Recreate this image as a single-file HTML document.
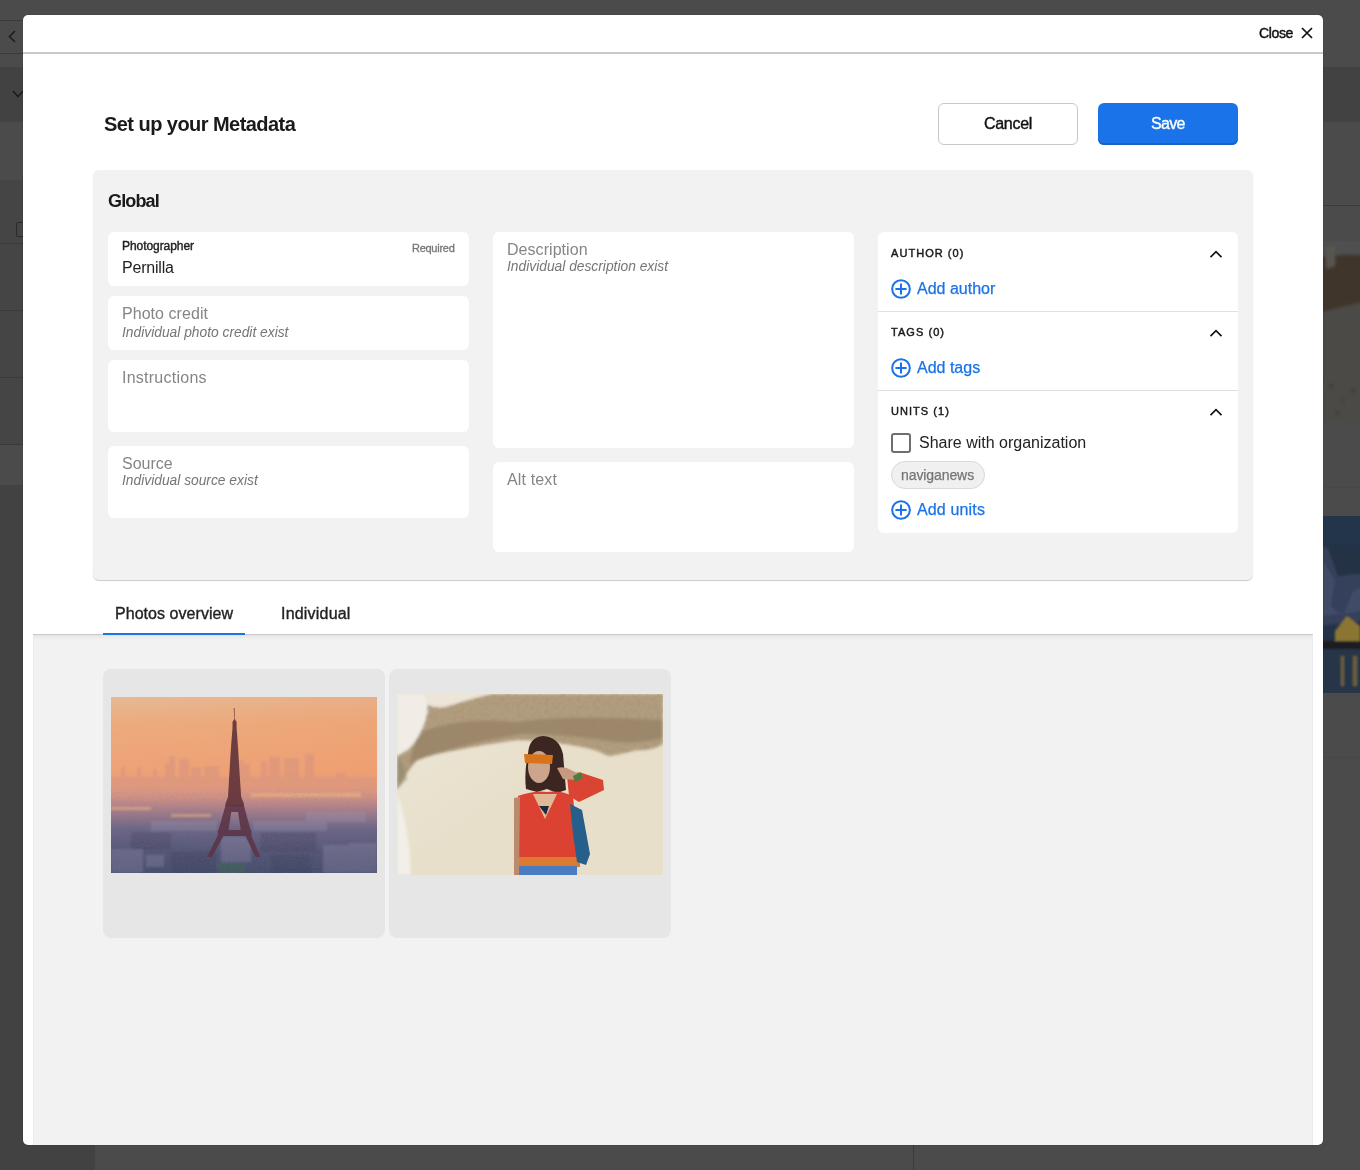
<!DOCTYPE html>
<html><head><meta charset="utf-8">
<style>
*{box-sizing:border-box;margin:0;padding:0}
html,body{width:1360px;height:1170px;overflow:hidden;background:#4b4b4b;font-family:"Liberation Sans",sans-serif;position:relative}
.abs{position:absolute}
.t{position:absolute;white-space:nowrap;line-height:1;-webkit-font-smoothing:antialiased;will-change:transform}
</style></head><body>
<div class='abs' style='left:0px;top:0px;width:1360px;height:1170px;background:#4b4b4b'></div>
<div class='abs' style='left:0px;top:67px;width:1360px;height:55px;background:#424242'></div>
<div class='abs' style='left:0px;top:20px;width:23px;height:1px;background:#3a3a3a'></div>
<div class='abs' style='left:0px;top:53px;width:23px;height:1px;background:#3a3a3a'></div>
<div class='abs' style='left:0px;top:180px;width:95px;height:63px;background:#454545'></div>
<div class='abs' style='left:0px;top:243px;width:95px;height:1px;background:#3a3a3a'></div>
<div class='abs' style='left:0px;top:244px;width:95px;height:66px;background:#454545'></div>
<div class='abs' style='left:0px;top:310px;width:95px;height:1px;background:#3a3a3a'></div>
<div class='abs' style='left:0px;top:311px;width:95px;height:66px;background:#454545'></div>
<div class='abs' style='left:0px;top:377px;width:95px;height:1px;background:#3a3a3a'></div>
<div class='abs' style='left:0px;top:378px;width:95px;height:66px;background:#454545'></div>
<div class='abs' style='left:0px;top:444px;width:95px;height:1px;background:#3a3a3a'></div>
<div class='abs' style='left:0px;top:485px;width:95px;height:685px;background:#424242'></div>
<div class='abs' style='left:913px;top:1145px;width:1px;height:25px;background:#3a3a3a'></div>
<div class='abs' style='left:1323px;top:205px;width:37px;height:1px;background:#3a3a3a'></div>
<div class='abs' style='left:1323px;top:487px;width:37px;height:1px;background:#474747'></div>
<div class='abs' style='left:1323px;top:757px;width:37px;height:1px;background:#474747'></div>
<div class='abs' style='left:16px;top:222px;width:14px;height:15px;border:1.5px solid #2a2a2a;border-radius:2px'></div>
<svg class='abs' style='left:0;top:0' width='30' height='120'><path d='M15 31 L9.5 36.5 L15 42' fill='none' stroke='#1c1c1c' stroke-width='1.6'/><path d='M13 91 L18 96.5 L23 91' fill='none' stroke='#1c1c1c' stroke-width='1.6'/></svg>
<svg class='abs' style='left:1323px;top:241px' width='37' height='181'><defs><filter id='rb'><feGaussianBlur stdDeviation='1.5'/></filter></defs><rect width='37' height='181' fill='#4c4a47'/><g filter='url(#rb)'><rect x='-5' y='-5' width='47' height='24' fill='#4f4f4f'/><path d='M-5 17 Q15 12 42 14 L42 60 Q20 66 -5 72Z' fill='#3f362c'/><path d='M3 5 L12 5 L12 25 L3 28Z' fill='#575550'/><g fill='#3e3b37'><circle cx='8' cy='145' r='2'/><circle cx='20' cy='160' r='1.5'/><circle cx='30' cy='150' r='2'/><circle cx='14' cy='172' r='2'/></g></g></svg>
<svg class='abs' style='left:1323px;top:516px' width='37' height='177'><defs><filter id='rb2'><feGaussianBlur stdDeviation='1.2'/></filter></defs><rect width='37' height='177' fill='#243246'/><g filter='url(#rb2)'><rect x='-5' y='-5' width='47' height='35' fill='#20344a'/><path d='M-5 30 L5 32 L15 60 L30 58 L42 58 L42 105 L-5 110Z' fill='#353f5a'/><path d='M0 45 L12 65 L8 90 L20 100 L30 75 L42 70 L42 95 L0 100Z' fill='#42506c' opacity='0.8'/><path d='M12 115 L24 100 L37 110 L37 128 L12 128Z' fill='#8a7632'/><rect x='-5' y='125' width='47' height='8' fill='#1c1c22'/><rect x='-5' y='133' width='47' height='50' fill='#273447'/><rect x='18' y='140' width='3' height='30' fill='#6a6040'/><rect x='30' y='140' width='4' height='30' fill='#6a6040'/></g></svg>
<div class='abs' style='left:23px;top:15px;width:1300px;height:1130px;background:#fff;border-radius:5px;box-shadow:0 0 1px rgba(0,0,0,0.6)'></div>
<div class='abs' style='left:23px;top:52px;width:1300px;height:2px;background:#c9c9c9'></div>
<div class='t' style='left:1258.50px;top:26.00px;font-size:14px;font-weight:normal;font-style:normal;color:#111;letter-spacing:-0.36px;-webkit-text-stroke:0.45px currentColor;'>Close</div>
<svg class='abs' style='left:1300px;top:25.5px' width='14' height='14'><path d='M2 2 L12 12 M12 2 L2 12' stroke='#111' stroke-width='1.7' fill='none'/></svg>
<div class='t' style='left:103.70px;top:114.00px;font-size:20px;font-weight:bold;font-style:normal;color:#1a1a1a;letter-spacing:-0.55px;'>Set up your Metadata</div>
<div class='abs' style='left:938px;top:103px;width:140px;height:42px;border:1px solid #c8c8c8;border-radius:6px;background:#fff'></div>
<div class='t' style='left:983.80px;top:116.00px;font-size:16px;font-weight:normal;font-style:normal;color:#111;letter-spacing:-0.3px;-webkit-text-stroke:0.4px currentColor;'>Cancel</div>
<div class='abs' style='left:1098px;top:103px;width:140px;height:42px;background:#1a73e8;border-radius:6px;box-shadow:inset 0 -2px 0 #1a62c4'></div>
<div class='t' style='left:1151.20px;top:116.00px;font-size:16px;font-weight:normal;font-style:normal;color:#fff;letter-spacing:-0.7px;-webkit-text-stroke:0.35px currentColor;'>Save</div>
<div class='abs' style='left:93px;top:170px;width:1160px;height:410px;background:#f2f2f2;border-radius:6px;box-shadow:0 1px 1px rgba(0,0,0,0.2)'></div>
<div class='t' style='left:108.30px;top:192.00px;font-size:18px;font-weight:bold;font-style:normal;color:#1a1a1a;letter-spacing:-0.85px;'>Global</div>
<div class='abs' style='left:108px;top:232px;width:361px;height:54px;background:#fff;border-radius:6px'></div>
<div class='abs' style='left:108px;top:296px;width:361px;height:54px;background:#fff;border-radius:6px'></div>
<div class='abs' style='left:108px;top:360px;width:361px;height:72px;background:#fff;border-radius:6px'></div>
<div class='abs' style='left:108px;top:446px;width:361px;height:72px;background:#fff;border-radius:6px'></div>
<div class='t' style='left:122.40px;top:240.00px;font-size:12px;font-weight:normal;font-style:normal;color:#1f1f1f;letter-spacing:-0.06px;-webkit-text-stroke:0.4px currentColor;'>Photographer</div>
<div class='t' style='right:905.40px;top:243.00px;font-size:11px;font-weight:normal;font-style:normal;color:#757575;letter-spacing:-0.27px;-webkit-text-stroke:0.3px currentColor;'>Required</div>
<div class='t' style='left:121.80px;top:260.00px;font-size:16px;font-weight:normal;font-style:normal;color:#222;letter-spacing:-0.2px;'>Pernilla</div>
<div class='t' style='left:122.40px;top:306.00px;font-size:16px;font-weight:normal;font-style:normal;color:#858585;letter-spacing:0.05px;'>Photo credit</div>
<div class='t' style='left:122.40px;top:326.00px;font-size:13.8px;font-weight:normal;font-style:italic;color:#757575;letter-spacing:0px;'>Individual photo credit exist</div>
<div class='t' style='left:122.40px;top:370.00px;font-size:16px;font-weight:normal;font-style:normal;color:#858585;letter-spacing:0.25px;'>Instructions</div>
<div class='t' style='left:122.40px;top:456.00px;font-size:16px;font-weight:normal;font-style:normal;color:#858585;letter-spacing:0px;'>Source</div>
<div class='t' style='left:122.40px;top:474.00px;font-size:13.8px;font-weight:normal;font-style:italic;color:#757575;letter-spacing:0px;'>Individual source exist</div>
<div class='abs' style='left:493px;top:232px;width:361px;height:216px;background:#fff;border-radius:6px'></div>
<div class='abs' style='left:493px;top:462px;width:361px;height:90px;background:#fff;border-radius:6px'></div>
<div class='t' style='left:507.00px;top:242.00px;font-size:16px;font-weight:normal;font-style:normal;color:#858585;letter-spacing:0.05px;'>Description</div>
<div class='t' style='left:507.00px;top:260.00px;font-size:13.8px;font-weight:normal;font-style:italic;color:#757575;letter-spacing:0px;'>Individual description exist</div>
<div class='t' style='left:507.00px;top:472.00px;font-size:16px;font-weight:normal;font-style:normal;color:#858585;letter-spacing:0.15px;'>Alt text</div>
<div class='abs' style='left:878px;top:232px;width:360px;height:301px;background:#fff;border-radius:6px'></div>
<div class='abs' style='left:878px;top:311px;width:360px;height:1px;background:#e0e0e0'></div>
<div class='abs' style='left:878px;top:390px;width:360px;height:1px;background:#e0e0e0'></div>
<div class='t' style='left:891.20px;top:248.00px;font-size:11px;font-weight:normal;font-style:normal;color:#1a1a1a;letter-spacing:1.05px;-webkit-text-stroke:0.45px currentColor;'>AUTHOR (0)</div>
<svg class='abs' style='left:1205px;top:246px' width='22' height='14'><path d='M5.5 11.2 L11 5.7 L16.5 11.2' fill='none' stroke='#111' stroke-width='1.65'/></svg>
<div class='t' style='left:891.20px;top:327.00px;font-size:11px;font-weight:normal;font-style:normal;color:#1a1a1a;letter-spacing:1.05px;-webkit-text-stroke:0.45px currentColor;'>TAGS (0)</div>
<svg class='abs' style='left:1205px;top:325px' width='22' height='14'><path d='M5.5 11.2 L11 5.7 L16.5 11.2' fill='none' stroke='#111' stroke-width='1.65'/></svg>
<div class='t' style='left:891.20px;top:406.00px;font-size:11px;font-weight:normal;font-style:normal;color:#1a1a1a;letter-spacing:1.05px;-webkit-text-stroke:0.45px currentColor;'>UNITS (1)</div>
<svg class='abs' style='left:1205px;top:404px' width='22' height='14'><path d='M5.5 11.2 L11 5.7 L16.5 11.2' fill='none' stroke='#111' stroke-width='1.65'/></svg>
<svg class='abs' style='left:890px;top:278px' width='22' height='22'><circle cx='11' cy='11' r='8.85' fill='none' stroke='#1a73e8' stroke-width='2'/><path d='M11 5.4 V16.6 M5.4 11 H16.6' stroke='#1a73e8' stroke-width='2'/></svg>
<div class='t' style='left:916.80px;top:281.00px;font-size:16px;font-weight:normal;font-style:normal;color:#1a73e8;letter-spacing:0px;-webkit-text-stroke:0.25px currentColor;'>Add author</div>
<svg class='abs' style='left:890px;top:357px' width='22' height='22'><circle cx='11' cy='11' r='8.85' fill='none' stroke='#1a73e8' stroke-width='2'/><path d='M11 5.4 V16.6 M5.4 11 H16.6' stroke='#1a73e8' stroke-width='2'/></svg>
<div class='t' style='left:916.80px;top:360.00px;font-size:16px;font-weight:normal;font-style:normal;color:#1a73e8;letter-spacing:0px;-webkit-text-stroke:0.25px currentColor;'>Add tags</div>
<div class='abs' style='left:891px;top:433px;width:20px;height:20px;border:2px solid #6e6e6e;border-radius:3px'></div>
<div class='t' style='left:919.30px;top:435.00px;font-size:16px;font-weight:normal;font-style:normal;color:#222;letter-spacing:0px;'>Share with organization</div>
<div class='abs' style='left:891px;top:461px;width:94px;height:28px;background:#f0f0f0;border:1px solid #d9d9d9;border-radius:14px'></div>
<div class='t' style='left:901.20px;top:468.00px;font-size:14px;font-weight:normal;font-style:normal;color:#757575;letter-spacing:-0.09px;-webkit-text-stroke:0.25px currentColor;'>naviganews</div>
<svg class='abs' style='left:890px;top:499px' width='22' height='22'><circle cx='11' cy='11' r='8.85' fill='none' stroke='#1a73e8' stroke-width='2'/><path d='M11 5.4 V16.6 M5.4 11 H16.6' stroke='#1a73e8' stroke-width='2'/></svg>
<div class='t' style='left:916.80px;top:502.00px;font-size:16px;font-weight:normal;font-style:normal;color:#1a73e8;letter-spacing:0.15px;-webkit-text-stroke:0.25px currentColor;'>Add units</div>
<div class='t' style='left:115.00px;top:606.00px;font-size:16px;font-weight:normal;font-style:normal;color:#222;letter-spacing:0.05px;-webkit-text-stroke:0.35px currentColor;'>Photos overview</div>
<div class='t' style='left:280.60px;top:606.00px;font-size:16px;font-weight:normal;font-style:normal;color:#222;letter-spacing:0.2px;-webkit-text-stroke:0.35px currentColor;'>Individual</div>
<div class='abs' style='left:33px;top:634px;width:1280px;height:511px;background:#f2f2f2;border-left:1px solid #ebebeb;border-right:1px solid #ebebeb'></div>
<div class='abs' style='left:33px;top:634px;width:1280px;height:1px;background:#c8c8c8'></div>
<div class='abs' style='left:34px;top:635px;width:1278px;height:5px;background:linear-gradient(#e6e6e6,#f2f2f2)'></div>
<div class='abs' style='left:103px;top:633px;width:142px;height:2px;background:#1a73e8'></div>
<div class='abs' style='left:103px;top:669px;width:282px;height:269px;background:#e6e6e6;border-radius:8px'></div>
<div class='abs' style='left:389px;top:669px;width:282px;height:269px;background:#e6e6e6;border-radius:8px'></div>
<svg class='abs' style='left:111px;top:697px' width='266' height='176' viewBox='0 0 266 176' preserveAspectRatio='none'><defs>
<linearGradient id='psky' x1='0' y1='0' x2='0' y2='1'>
<stop offset='0' stop-color='#e6b995'/>
<stop offset='0.15' stop-color='#ecab7e'/>
<stop offset='0.42' stop-color='#eea277'/>
<stop offset='0.5' stop-color='#e49e80'/>
<stop offset='0.57' stop-color='#cf9085'/>
<stop offset='0.65' stop-color='#a27c8a'/>
<stop offset='0.75' stop-color='#6c6686'/>
<stop offset='0.88' stop-color='#545676'/>
<stop offset='1' stop-color='#464e6c'/>
</linearGradient>
<linearGradient id='pright' x1='0' y1='0' x2='1' y2='0'>
<stop offset='0' stop-color='#f0a070' stop-opacity='0'/>
<stop offset='1' stop-color='#f09a68' stop-opacity='0.35'/>
</linearGradient>
<filter id='pb' x='-5%' y='-5%' width='110%' height='110%'><feGaussianBlur stdDeviation='0.9'/></filter>
<filter id='pn' x='0' y='0' width='100%' height='100%'>
<feTurbulence type='fractalNoise' baseFrequency='0.6' numOctaves='2' seed='3' result='n'/>
<feColorMatrix in='n' type='matrix' values='0 0 0 0 0.2  0 0 0 0 0.2  0 0 0 0 0.3  0 0 0 1.6 -0.75'/>
</filter>
</defs>
<rect width='266' height='176' fill='url(#psky)'/>
<rect width='266' height='90' fill='url(#pright)'/>
<g filter='url(#pb)'>
<g fill='#dc967c' opacity='0.75'>
<rect x='10' y='70' width='4' height='22'/><rect x='26' y='70' width='4' height='22'/><rect x='42' y='72' width='4' height='20'/>
<rect x='54' y='66' width='5' height='26'/><rect x='58' y='59' width='6' height='33'/><rect x='68' y='62' width='10' height='30'/>
<rect x='80' y='70' width='10' height='22'/><rect x='93' y='69' width='15' height='25'/><rect x='128' y='63' width='5' height='28'/><rect x='133' y='67' width='6' height='25'/>
<rect x='150' y='64' width='6' height='28'/><rect x='158' y='60' width='11' height='32'/><rect x='173' y='61' width='15' height='30'/>
<rect x='194' y='57' width='9' height='34'/><rect x='225' y='76' width='10' height='16'/>
<rect x='0' y='80' width='266' height='14'/>
</g>
<g fill='#f6bc80' opacity='0.5'><rect x='140' y='96' width='110' height='4'/><rect x='0' y='110' width='40' height='3'/><rect x='60' y='117' width='40' height='3'/></g>
<g fill='#a8a0bc' opacity='0.25'>
<rect x='40' y='124' width='66' height='10'/><rect x='142' y='124' width='74' height='10'/>
<rect x='212' y='148' width='28' height='28'/><rect x='238' y='146' width='28' height='30'/><rect x='0' y='152' width='32' height='24'/><rect x='35' y='158' width='18' height='12'/>
<rect x='110' y='140' width='30' height='25'/><rect x='195' y='115' width='60' height='10'/>
</g>
<g fill='#303450' opacity='0.22'>
<rect x='20' y='135' width='40' height='18'/><rect x='150' y='135' width='55' height='20'/><rect x='60' y='155' width='45' height='21'/><rect x='160' y='158' width='40' height='18'/>
</g>
<rect x='108' y='166' width='26' height='10' fill='#3e6a50' opacity='0.5'/>
</g>
<rect y='92' width='266' height='84' filter='url(#pn)' opacity='0.35'/>
<g fill='#62343c' opacity='0.92'>
<path d='M122.7 11 L123.5 11 L123.8 22 L125.6 25 L125.6 31 L127 50 L129 83 L130.2 100 L133 107 L133 109 L114.4 109 L114.4 107 L117 100 L118 83 L120 50 L121.5 31 L121.5 25 L123.3 22Z'/>
</g>
<g fill='#5c3446' opacity='0.88'>
<path d='M114.6 108 L132.8 108 L136 120 L139.6 133 L140.4 134 L140.4 139 L106.8 139 L106.8 134 L107.6 133 L111.2 120Z M117.5 133 L129.8 133 L127 115 L120.3 115Z' fill-rule='evenodd'/>
<path d='M107 138 L113 138 L101 160 L96 160Z M134 138 L140 138 L149.5 160 L144.5 160Z'/>
</g>
</svg>
<svg class='abs' style='left:397px;top:694px' width='266' height='181' viewBox='0 0 266 181' preserveAspectRatio='none'><defs>
<linearGradient id='wsand' x1='0' y1='0' x2='1' y2='1'>
<stop offset='0' stop-color='#ede7d8'/>
<stop offset='0.5' stop-color='#e7dfca'/>
<stop offset='1' stop-color='#e8dfca'/>
</linearGradient>
<filter id='wb' x='-10%' y='-10%' width='120%' height='120%'><feGaussianBlur stdDeviation='1.5'/></filter>
<filter id='wb2' x='-10%' y='-10%' width='120%' height='120%'><feGaussianBlur stdDeviation='0.7'/></filter>
<filter id='wn' x='0' y='0' width='100%' height='100%'>
<feTurbulence type='fractalNoise' baseFrequency='0.25' numOctaves='3' seed='7' result='n'/>
<feColorMatrix in='n' type='matrix' values='0 0 0 0 0.35  0 0 0 0 0.27  0 0 0 0 0.18  0 0 0 2.2 -1.0'/>
</filter>
<clipPath id='wclip'><path d='M30 10 Q38 16 52 12 Q70 6 95 0 L266 0 L266 50 Q255 57 240 56 Q225 60 212 62 Q195 54 180 52 Q150 46 120 46 Q90 50 60 56 Q35 60 20 66 Q8 80 0 96 L0 62 L12 55 Q22 45 28 28Z'/></clipPath>
</defs>
<rect width='266' height='181' fill='url(#wsand)'/>
<g filter='url(#wb)'>
<path d='M0 0 L266 0 L266 50 Q255 57 240 56 Q225 60 212 62 Q195 54 180 52 Q150 46 120 46 Q90 50 60 56 Q35 60 20 66 Q8 80 0 96Z' fill='#b19c7e'/>
<path d='M20 40 Q60 22 120 28 Q170 20 266 26 L266 44 Q232 52 205 46 Q165 40 125 40 Q85 46 45 58 Q25 64 12 70Z' fill='#8d7659' opacity='0.55'/>
<path d='M0 0 L28 0 Q34 12 28 28 Q22 45 12 55 L0 62Z' fill='#f1ede6'/>
<path d='M28 0 L95 0 Q70 6 52 12 Q38 16 30 10Z' fill='#ece5d8'/>
<path d='M0 100 Q12 130 14 181 L0 181Z' fill='#f2efe9'/>
<path d='M0 62 Q8 70 10 85 L0 95Z' fill='#8a8a6a' opacity='0.6'/>
</g>
<g clip-path='url(#wclip)'><rect width='266' height='100' filter='url(#wn)' opacity='0.45'/></g>
<g filter='url(#wb2)'>
<path d='M131 60 Q132 43 146 42 Q162 43 166 60 L169 96 L160 99 L150 95 L140 98 L129 95 Q127 78 131 60Z' fill='#3b2522'/>
<ellipse cx='142' cy='73' rx='11' ry='16' fill='#cda48c'/>
<path d='M127 60 L156 61 L155 70 L128 69Z' fill='#d8731c'/>
<path d='M170 82 Q180 76 188 80 L206 86 L207 96 L182 108 L172 102Z' fill='#d94430'/>
<path d='M160 74 Q168 72 174 76 L186 82 L180 86 L166 85Z' fill='#c59a80'/>
<path d='M176 82 L184 78 L186 84 L178 88Z' fill='#4a8040'/>
<path d='M121 102 Q138 96 150 98 Q166 96 176 103 L180 140 L182 166 L117 166 L120 136Z' fill='#dc4231'/>
<path d='M136 100 L148 125 L160 100Z' fill='#e2b996'/>
<path d='M142 112 L152 112 L149 121Z' fill='#1c2a40'/>
<rect x='117' y='163' width='66' height='10' fill='#dc7a33'/>
<rect x='122' y='172' width='58' height='9' fill='#4b7cc2'/>
<path d='M173 110 L185 116 L193 160 L189 171 L180 168 L176 140Z' fill='#255f8a'/>
<path d='M117 104 L123 103 L122 181 L117 181Z' fill='#bb8a6c'/>
</g>
</svg>
</body></html>
